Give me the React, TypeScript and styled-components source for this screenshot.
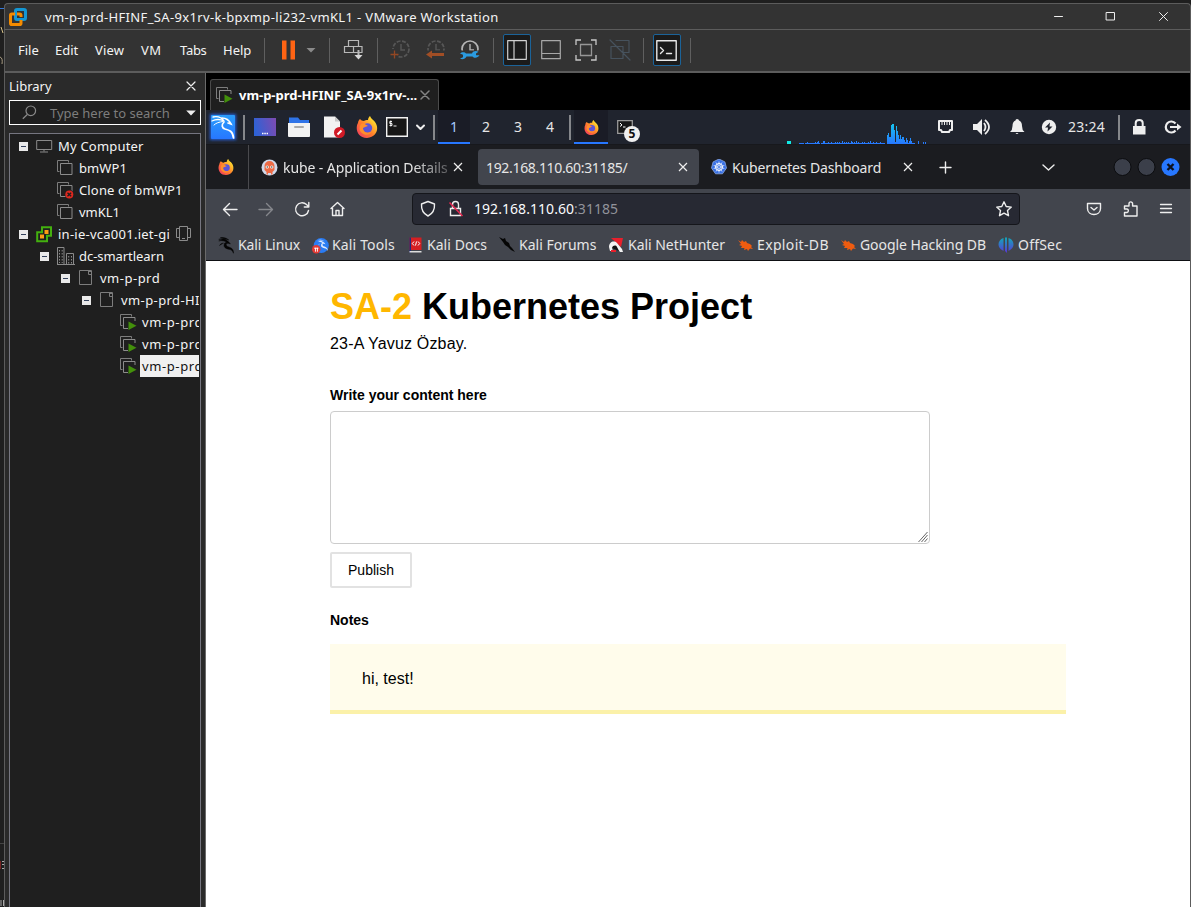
import React from 'react';
import styled, { createGlobalStyle, css } from 'styled-components';

const winFont = '"Noto Sans", "Open Sans", sans-serif';
const line = '#5c5c5c';

const Global = createGlobalStyle`
  * { box-sizing: border-box; }
  body { margin: 0; background: #1f1f1f; overflow: hidden; }
  svg { display: block; flex: none; }
`;

/* ---------- window frame ---------- */
const Desktop = styled.div`
  width: 1191px; height: 907px; padding: 3px 0 0 4px; overflow: hidden;
  background: #1f1f1f; font: 13px/18px ${winFont}; color: #f4f4f4; white-space: nowrap;
  position: relative;
`;
const Behind = styled.div`
  position: absolute; left: 0; top: 0; width: 4px; height: 907px;
`;
const Frame = styled.div`
  height: 904px; border: 1px solid ${line}; border-bottom: 0; background: #333;
  border-radius: 4px 4px 0 0;
  display: flex; flex-direction: column;
`;
const TitleBar = styled.header`
  height: 26px; flex: none; display: flex; align-items: center; border-bottom: 1px solid ${line};
  padding-left: 3px;
`;
const Title = styled.span`flex: 1; margin-left: 17px; letter-spacing: 0.345px; padding-top: 1px;`;
const WindowControls = styled.div`display: flex; gap: 37.5px; padding-right: 19.5px;`;

const MenuBar = styled.div`
  height: 43px; flex: none; display: flex; align-items: center; border-bottom: 2px solid ${line};
  padding-bottom: 1px;
`;
const Menu = styled.nav`display: flex; width: 259px; padding: 0 0 1px 13px;`;
const MenuItem = styled.span<{ $w: number; $ls?: number }>`
  width: ${p => p.$w}px; letter-spacing: ${p => p.$ls ?? 0}px;
`;
const Divider = styled.i`width: 1px; height: 25px; background: #5f5f5f; flex: none;`;
const ToolGroup = styled.div<{ $gap?: number; $l: number; $r: number }>`
  display: flex; align-items: center; gap: ${p => p.$gap ?? 0}px;
  padding: 0 ${p => p.$r}px 0 ${p => p.$l}px;
`;
const ToolToggle = styled.div<{ $on?: boolean }>`
  width: 28px; height: 32px; display: grid; place-items: center; border-radius: 2px;
  ${p => p.$on && css`background: #1b1b1b; border: 1px solid #1b6399;`}
`;

const Body = styled.div`flex: 1; min-height: 0; display: flex;`;

/* ---------- library ---------- */
const Library = styled.aside`
  width: 201px; flex: none; background: #2a2a2a; border-right: 1px solid #6a6a6a;
  display: flex; flex-direction: column; padding: 0 4px;
`;
const LibraryHead = styled.div`
  height: 27px; display: flex; align-items: center; justify-content: space-between; padding: 0 5px 2px 0;
`;
const Search = styled.div`
  height: 25px; flex: none; border: 1px solid #fff; background: #1f1f1f; color: #7d7d7d;
  display: flex; align-items: center; padding: 0 4px 0 12px;
`;
const SearchHint = styled.span`flex: 1; margin-left: 13px;`;
const Tree = styled.div`
  margin-top: 8px; flex: 1; border: 1px solid #767680; border-bottom: 0; background: #1f1f1f;
  padding: 1px 1px 0 0; overflow: hidden;
`;
const TreeRow = styled.div<{ $level: number }>`
  height: 22px; display: flex; align-items: center; padding-left: ${p => 9 + 21 * p.$level}px;
  overflow: hidden;
`;
const TreeIcon = styled.span<{ $gap?: number }>`
  width: 20px; margin-left: ${p => p.$gap ?? 8}px; display: flex; flex: none;
`;
const TreeLabel = styled.span<{ $selected?: boolean; $ls?: number }>`
  line-height: 22px; padding: 0 2px; letter-spacing: ${p => p.$ls ?? 0}px; height: 22px;
  ${p => p.$selected && css`background: #f0f0f0; color: #111;`}
`;

/* ---------- console ---------- */
const Console = styled.main`flex: 1; min-width: 0; background: #000; display: flex; flex-direction: column;`;
const VmTabs = styled.div`height: 37px; flex: none; display: flex; align-items: flex-end; padding-left: 4px;`;
const VmTab = styled.div`
  width: 229px; height: 31px; background: #1f1f1f; border: 1px solid #4b4b4b; border-bottom: 0;
  border-radius: 3px 3px 0 0; display: flex; align-items: center; padding: 0 8px 1px 5px;
  font-weight: 700; font-size: 13px; color: #fff;
`;
const VmTabName = styled.span`flex: 1; margin-left: 5px; letter-spacing: -0.03px;`;

const Guest = styled.section`
  flex: 1; min-height: 0; display: flex; flex-direction: column; color: #e6e6e6;
  font: 14px/20px "Noto Sans", "Open Sans", sans-serif;
`;
const Panel = styled.div`
  height: 34px; flex: none; background: #20242e; display: flex; align-items: center;
`;
const PanelDivider = styled.i<{ $l: number; $r: number }>`
  width: 2px; height: 25px; background: #85878b; margin: 0 ${p => p.$r}px 0 ${p => p.$l}px; flex: none;
`;
const Launchers = styled.div`display: flex; align-items: center; gap: 10px; margin-right: 8px;`;
const Workspace = styled.div<{ $active?: boolean }>`
  width: 32px; height: 34px; display: grid; place-items: center; padding-top: 2px;
  border-bottom: 2px solid transparent;
  ${p => p.$active && css`background: #1a1c26; border-color: #2777ff; color: #a8caff;`}
`;
const Task = styled(Workspace)`width: 34px;`;
const TaskTerminal = styled.div`position: relative; margin-left: 9px;`;
const TaskCount = styled.b`
  position: absolute; left: 7px; top: 6px; width: 16px; height: 16px; border-radius: 50%;
  background: #efefef; color: #111; font-size: 12px; line-height: 16px; text-align: center;
`;
const GraphSlot = styled.div`align-self: flex-end;`;
const Tray = styled.div`display: flex; align-items: center;`;
const Clock = styled.span`width: 55px; padding-left: 5px; letter-spacing: 0.25px;`;
const Spacer = styled.i`flex: 1;`;

/* ---------- browser ---------- */
const BrowserTabs = styled.div`
  height: 45px; flex: none; background: #1b1c20; border-top: 1px solid #17181c;
  display: flex; align-items: center; padding-left: 12px;
`;
const PinnedTab = styled.div`width: 31px; height: 44px; display: flex; align-items: center; border-right: 1px solid #4a4a4e;`;
const BrowserTab = styled.div<{ $w: number; $l: number; $active?: boolean; $pr: number }>`
  width: ${p => p.$w}px; height: 36px; display: flex; align-items: center; border-radius: 4px;
  padding: 0 ${p => p.$pr}px 0 ${p => p.$l}px; gap: 5px;
  ${p => p.$active && css`background: #42454d;`}
`;
const TabName = styled.span<{ $fade?: boolean; $ls: number }>`
  flex: 1; letter-spacing: ${p => p.$ls}px; padding-top: 2px;
  ${p => p.$fade && css`
    margin-right: -5px;
    mask-image: linear-gradient(to right, #000 78%, rgba(0, 0, 0, 0.3));
  `}
`;
const RoundButtons = styled.div`display: flex; gap: 5px; padding: 0 10px 0 55px;`;
const NavBar = styled.div`
  height: 41px; flex: none; background: #42454d; display: flex; align-items: center; padding: 0 0 1px 14px;
`;
const NavButtons = styled.div`display: flex; gap: 16px;`;
const Address = styled.div`
  width: 608px; height: 32px; margin-left: 64px; border: 1px solid #15161b; border-radius: 4px;
  background: #272933; display: flex; align-items: center; padding: 0 5px;
`;
const AddressText = styled.span`flex: 1; margin-left: 8px; color: #fbfbfe; letter-spacing: 0.05px;`;
const Port = styled.span`color: #92939b;`;
const NavActions = styled.div`display: flex; gap: 16px; margin-left: 64px;`;
const Bookmarks = styled.div`
  height: 31px; flex: none; background: #42454d; border-bottom: 1px solid #0e0f13;
  display: flex; align-items: center; padding-left: 12px;
`;
const Bookmark = styled.span<{ $w: number; $ls: number }>`
  width: ${p => p.$w}px; flex: none; display: flex; align-items: center; gap: 3px; letter-spacing: ${p => p.$ls}px;
`;

/* ---------- page ---------- */
const Page = styled.article`
  flex: 1; background: #fff; color: #000; padding: 25px 0 0 124px; white-space: normal;
  font: 16px/20px "Liberation Sans", Arial, sans-serif;
`;
const Heading = styled.h1`margin: 0; font-size: 36px; line-height: 42px; font-weight: 700;`;
const Accent = styled.span`color: #ffb700;`;
const Author = styled.p`margin: 6px 0 0; letter-spacing: 0.18px;`;
const Label = styled.label<{ $mt: number }>`
  display: block; margin: ${p => p.$mt}px 0 0; font-size: 14px; line-height: 18px; font-weight: 700;
`;
const Editor = styled.div`
  width: 600px; height: 133px; margin-top: 7px; border: 1px solid #ccc; border-radius: 4px;
  display: flex; align-items: flex-end; justify-content: flex-end;
`;
const Publish = styled.button`
  display: block; margin-top: 8px; width: 82px; height: 36px; padding: 0; border: 2px solid #e2e2e2; border-radius: 2px;
  background: #fff; color: #000; font: 14px/18px "Liberation Sans", Arial, sans-serif;
`;
const Note = styled.div`
  width: 736px; height: 70px; margin-top: 15px; padding: 25px 32px 0; background: #fffceb;
  border-bottom: 4px solid #fbf1a9;
`;

/* ---------- drawings ---------- */
const VmIcon = ({ state }: { state?: 'run' | 'bad' }) => (
  <svg width="18" height="18" viewBox="0 0 18 18" fill="none">
    <path d="M2.500 12.500h-2v-11h11v2" stroke="#7d7d7d" />
    <path d="M3.500 4.500h11.500v11H3.500z" stroke="#8c8c8c" fill="#1f1f1f" />
    {state === 'run' && <><path d="M8 8h10v10H8z" fill="#1f1f1f" /><path d="M8.500 8.500v8.500l8-4.200z" fill="#43900b" /></>}
    {state === 'bad' && <><circle cx="12.500" cy="13.500" r="4.600" fill="#1f1f1f" /><circle cx="12.300" cy="13.500" r="4" fill="#dd281f" /><path d="m10.500 11.700 3.600 3.600m0-3.600-3.600 3.600" stroke="#1f1f1f" strokeWidth="1.300" /></>}
  </svg>
);
const Minus = () => (
  <svg width="9" height="9" viewBox="0 0 9 9"><path d="M0 0h9v9H0z" fill="#e9e9e9" /><path d="M2 4.500h5" stroke="#33415c" /></svg>
);
const Pool = () => (
  <svg width="18" height="18" viewBox="0 0 18 18" fill="none" stroke="#7d7d7d"><path d="M1.500 1.500h12v14h-12zM10.500 1.500v4h3M11 2.500h2" /></svg>
);
const Computer = () => (
  <svg width="17" height="16" viewBox="0 0 17 16" fill="none" stroke="#8a8a8a"><path d="M.7 2.500h15v9H.7zM8 11.500v2M4 14h8" /></svg>
);
const Server = () => (
  <svg width="17" height="17" viewBox="0 0 17 17" fill="none">
    <path d="M6 1.200h9v8.500h-4v5.500H1.200v-9H6z" stroke="#43b00f" strokeWidth="2" />
    <path d="M8.500 4h4v4h-4zM4 8.500h4v4H4z" fill="#ff9c12" />
  </svg>
);
const Datacenter = () => (
  <svg width="18" height="18" viewBox="0 0 18 18" fill="none" stroke="#8a8a8a">
    <path d="M.5.500h6.500v17H.5zM9.500 6.500h7v11h-7zM0 17.500h18" /><path d="M2.500 3v13M5.200 3v13M11.700 9v8M14.500 9v8" strokeDasharray="1.500 1.500" />
  </svg>
);
const Devices = () => (
  <svg width="18" height="18" viewBox="0 0 18 18" fill="none" stroke="#8a8a8a"><path d="M4.500 1.500h8v14h-8zM4.500 3.500h-3v9h3M12.500 3.500h3v9h-3M7 13.500h3" /></svg>
);
const Firefox = ({ size }: { size: number }) => (
  <svg width={size} height={size} viewBox="0 0 22 22">
    <defs><linearGradient id="fx" x1="1" y1="0" x2="0" y2="1"><stop offset=".2" stopColor="#ffd62e" /><stop offset=".55" stopColor="#ff7a2c" /><stop offset="1" stopColor="#f0326a" /></linearGradient></defs>
    <path d="M4 3c1 1 2 2 4 2 1-1 2-1 4-1 0-2 1-3 2-4 1 3 4 4 5 6 4 5 3 15-8 16C1 22-1 12 2 7c0-2 1-3 2-4z" fill="url(#fx)" />
    <circle cx="11.500" cy="12" r="4.700" fill="#5b55d8" />
    <path d="M5 8c2-1 4 0 7 2l-3 1-2 1c0 5 6 6 9 3-1 4-7 5-10 2-3-2-3-6-1-9z" fill="#ff8f2c" />
  </svg>
);
const dragonPath = 'M1 3c4-1 8-1 11 2 2 1 3 3 4 4l-3-1c-2 0-3 1-2 3 1 2 5 2 7 4 2 2 2 4 2 6-1-3-3-5-6-5-4-1-7-3-6-6 0-2 1-3 3-3-2-2-6-3-10-2l5-1C4 3 3 3 1 3zM3 1c4-1 8 0 11 3-3-1-6-2-11-3zM2 11c1-2 3-3 5-3-2 1-4 2-5 3z';
const Dragon = () => (
  <svg width="17" height="17" viewBox="0 0 22 22"><path d={dragonPath} fill="#050505" stroke="#050505" strokeWidth=".6" /></svg>
);
const ToolsDragon = () => (
  <svg width="17" height="17" viewBox="0 0 22 22">
    <circle cx="12" cy="11" r="9.800" fill="#2a7cf3" />
    <path d={dragonPath} transform="translate(6 3) scale(.72)" fill="#dfeaff" />
    <circle cx="5.500" cy="16" r="5.500" fill="#e23a34" /><path d="M2.800 14.500h5.500M4.500 14v5M7 14v5" stroke="#fff" strokeWidth="1.200" />
  </svg>
);
const KaliMenu = () => (
  <svg width="34" height="34" viewBox="0 0 34 34">
    <defs><filter id="glow" x="-30%" y="-30%" width="160%" height="160%"><feGaussianBlur stdDeviation="1.800" /></filter>
      <linearGradient id="kb" x1="0" y1="0" x2="0" y2="1"><stop stopColor="#2a9dfb" /><stop offset="1" stopColor="#2777ff" /></linearGradient></defs>
    <rect x="4" y="4" width="26" height="26" fill="#2461d8" filter="url(#glow)" />
    <rect x="5" y="5" width="24" height="24" rx="1" fill="url(#kb)" />
    <g fill="none" stroke="#fff" strokeLinecap="round">
      <path d="M7 7c5-1 9 1 11 4M6 11c4-2 8-2 12 0" strokeWidth="1.300" />
      <path d="M8 15c2-2 5-3 9-3.500" strokeWidth="1" />
      <path d="M16 8c4 0 7 2 9 6l-3-1M18 12c-3 3-2 6 1 7 4 1 8 2 8.500 9" strokeWidth="1.700" />
    </g>
  </svg>
);
const DesktopIcon = () => (
  <svg width="24" height="24" viewBox="0 0 24 24"><defs><linearGradient id="dk" x1="0" y1=".5" x2="1" y2=".3"><stop stopColor="#2d62d6" /><stop offset="1" stopColor="#7a4cb4" /></linearGradient></defs>
    <path d="M1 3h22v18H1z" fill="url(#dk)" /><path d="M9 18.500h6" stroke="#fff" strokeWidth="1.500" strokeDasharray="1.500 .8" /></svg>
);
const FolderIcon = () => (
  <svg width="24" height="24" viewBox="0 0 24 24"><path d="M2 2.500h9l2 2.500h9v6H2z" fill="#2f74e8" /><path d="M1 8h22v13q0 1-1 1H2q-1 0-1-1z" fill="#f2f2f2" /><path d="M8 12h8" stroke="#aaa" strokeWidth="2" strokeLinecap="round" /></svg>
);
const DocIcon = () => (
  <svg width="25" height="24" viewBox="-1 0 25 24"><path d="M2 1.500h11l5 5v16H2z" fill="#f2f2f2" /><path d="M13 1.500v5h5z" fill="#c8c8c8" /><circle cx="17.500" cy="17.500" r="5.500" fill="#d01a26" /><path d="m15.500 19.500 4-4" stroke="#fff" strokeWidth="2" /></svg>
);
const TerminalIcon = () => (
  <svg width="22" height="24" viewBox="0 0 22 24" fill="none"><path d="M.7 2.700h20.600v18.600H.7z" fill="#161616" stroke="#f2f2f2" strokeWidth="1.400" /><path d="M6 6.500H3.800v2H6v2H3.500M4.800 5.500v6M7.500 11h3" stroke="#fff" strokeWidth=".9" /></svg>
);
const Cross = () => (
  <svg width="20" height="20" viewBox="-10 -10 20 20"><path d="M-4-4 4 4M4-4-4 4" stroke="#eee" strokeWidth="1.200" /></svg>
);
const ClockTool = ({ kind }: { kind: 'take' | 'revert' | 'manage' }) => {
  const c = kind === 'manage' ? '#b5b5b5' : '#575757';
  return (
    <svg width="24" height="24" viewBox="0 0 24 24" fill="none">
      <circle cx="13" cy="11" r="8" stroke={c} strokeWidth="1.700" strokeDasharray={kind === 'manage' ? undefined : '4 1.500'} />
      <path d="M13 6v6h4" stroke={c} strokeWidth="1.400" />
      {kind === 'take' && <><path d="M2 11h7v11H2z" fill="#333" /><path d="M6.500 12.500v8M2.500 16.500h8" stroke="#934723" strokeWidth="1.300" /></>}
      {kind === 'revert' && <><path d="M2 12.500h20v9H2z" fill="#333" /><path d="M3 16.500 9 12.500V15h12v3H9v2.500z" fill="#a14e25" /></>}
      {kind === 'manage' && <><path d="M2 12.500h21v9H2z" fill="#333" /><path d="M3 15.500C5 13.500 8 14 9 15.500h6c1-2.500 4-3 6.500-1.800L19 15.500v1.800h3.500C21 20 17 20.500 15.500 18.500H9.500C8 21.500 5 21.800 3 20.500l3-1.200v-2.500z" fill="#2b9be0" /></>}
    </svg>
  );
};
const Star = () => (
  <svg width="20" height="20" viewBox="0 0 20 20" fill="none" stroke="#eee" strokeWidth="1.400" strokeLinejoin="round"><path d="m10 2.800 2.200 4.700 5.100.6-3.800 3.500 1 5.100-4.500-2.500-4.500 2.500 1-5.100L2.700 8.100l5.100-.6z" /></svg>
);
const K8s = () => (
  <svg width="16" height="16" viewBox="0 0 16 16" fill="none"><path d="m8 0 5.900 2.900L15.500 9l-4 5.800h-7L.5 9 2.100 2.900z" fill="#3970e4" stroke="#9bb8f2" strokeWidth=".7" /><circle cx="8" cy="8" r="3.500" stroke="#fff" /><path d="M8 2.500v11M2.700 6.500l10.600 3M2.700 9.500l10.600-3M5 12.500l6-9M5 3.500l6 9" stroke="#fff" strokeWidth=".7" /><circle cx="8" cy="8" r="1" fill="#3970e4" /></svg>
);
const Argo = () => (
  <svg width="17" height="17" viewBox="0 0 17 17"><circle cx="8.500" cy="8.500" r="8" fill="#cfd8ea" /><path d="M3.500 7a5 5 0 0 1 10 0v4l-2 2v2.500h-1.500V14H7v1.500H5.500V13l-2-2z" fill="#ec6a45" /><circle cx="6.200" cy="8" r="1.600" fill="#fff" /><circle cx="10.800" cy="8" r="1.600" fill="#fff" /><circle cx="6.200" cy="8" r=".7" fill="#222" /><circle cx="10.800" cy="8" r=".7" fill="#222" /></svg>
);
const Ghost = () => (
  <svg width="17" height="16" viewBox="0 0 17 16"><path d="m1 3 3 2 1-2 2 2 2-1 1 2 3 1 2 2-1 1 2 2-3-.5L11 14l-1-2-3 1 .5-2L4 11l1-2-3-1 2-1z" fill="#ef5c10" /></svg>
);
const Docs = () => (
  <svg width="15" height="16" viewBox="0 0 15 16" fill="none"><path d="M.5.500h12V13H.5z" fill="#d41f22" /><path d="M.5.500H2v15H.5z" fill="#222b7a" /><path d="M.5 14h12v1.500H.5z" fill="#ddd" /><path d="M5 4.500 3.300 6.500 5 8.500M9 4.500l1.700 2L9 8.500M7.500 4.500l-1 4" stroke="#fff" /></svg>
);
const Forums = () => (
  <svg width="17" height="16" viewBox="0 0 17 16"><path d="m0 0 4 2 2-1 1 3 3 2 1 3 2 2 3 4-4-2-3-3-3-2-2-3z" fill="#050505" /></svg>
);
const NetHunter = () => (
  <svg width="17" height="16" viewBox="0 0 17 16"><path d="M3 1h12l-2 9z" fill="#e8202c" /><path d="M1 10C1 5 6 3 9 6l5 6 1 3h-3l-4-5c-2-1-3 0-4 2l2 2H2z" fill="#f2f2f2" /><path d="M4 11c1-3 4-3 5-1l2 4z" fill="#111" /><path d="M3 13h5v2H3z" fill="#e8202c" /></svg>
);
const OffSec = () => (
  <svg width="17" height="16" viewBox="0 0 17 16"><defs><linearGradient id="os" x1="0" y1="0" x2="0" y2="1"><stop stopColor="#12a8b8" /><stop offset="1" stopColor="#5b35d8" /></linearGradient></defs><path d="M5.500 1v13C2 12 .5 10 .5 7.500S2 2 5.500 1zM7 .5h2V16L7 14zM10.500 1v13c3.500-2 5-4 5-6.500S14 2 10.500 1z" fill="url(#os)" /></svg>
);

const idle = [1,1,1,1,1,0,1,1,2,1,1,1,1,1,1,1,2,1,2,3,1,0,1,1,3,3,1,1,1,2,1,1,2,1,1,1,2,1,2,1,2,1,1,3,1,2,1,2,1,2,1,1,3,2,1,2,1,3,1,2,1,1,1,2,1,2,1,1,1,2,1,3,1,1,2,1,1,2,1,1,1,2,1,1,1,1];
const burst = [9, 11, 7, 7, 19, 20, 20, 14, 2, 18, 13, 9, 5, 9, 5, 7, 7, 4, 2, 6, 4, 1, 3, 6, 3, 1, 1, 1];
const CpuGraph = () => (
  <svg width="142" height="24" viewBox="0 0 142 24" shapeRendering="crispEdges">
    <defs><linearGradient id="cpu" gradientUnits="userSpaceOnUse" x1="0" y1="4" x2="0" y2="24"><stop stopColor="#16c3f0" /><stop offset="1" stopColor="#2777ff" /></linearGradient></defs>
    <path d="M1 21h4v3H1z" fill="#10e9e4" />
    <g fill="url(#cpu)">
      {idle.map((h, i) => h > 0 && <rect key={i} x={13 + i} y={24 - h} width="1" height={h} />)}
      {burst.map((h, i) => <rect key={i} x={101 + i} y={24 - h} width="1" height={h} />)}
      <path d="M132 21h1v3h-1zM137 22h1v2h-1zM139 22h1v2h-1z" />
    </g>
  </svg>
);

const Tool = ({ d, size = 20, color = '#eee', w = 1.4 }: { d: string; size?: number; color?: string; w?: number }) => (
  <svg width={size} height={size} viewBox={`0 0 ${size} ${size}`} fill="none" stroke={color} strokeWidth={w} strokeLinejoin="round" strokeLinecap="round"><path d={d} /></svg>
);

const menu: [string, number, number][] = [['File', 37, 0], ['Edit', 40, 0], ['View', 46, 0.2], ['VM', 39, 0.5], ['Tabs', 43, -0.3], ['Help', 41, 0]];

type Node = { level: number; label: string; icon: React.ReactNode; open?: boolean; selected?: boolean; extra?: boolean; ls?: number };
const nodes: Node[] = [
  { level: 0, label: 'My Computer', icon: <Computer />, open: true, ls: 0.2 },
  { level: 1, label: 'bmWP1', icon: <VmIcon />, ls: 0.1 },
  { level: 1, label: 'Clone of bmWP1', icon: <VmIcon state="bad" />, ls: 0.15 },
  { level: 1, label: 'vmKL1', icon: <VmIcon /> },
  { level: 0, label: 'in-ie-vca001.iet-gi', icon: <Server />, open: true, extra: true, ls: 0.25 },
  { level: 1, label: 'dc-smartlearn', icon: <Datacenter />, open: true, ls: -0.05 },
  { level: 2, label: 'vm-p-prd', icon: <Pool />, open: true, ls: 0.5 },
  { level: 3, label: 'vm-p-prd-HI', icon: <Pool />, open: true, ls: 0.4 },
  { level: 4, label: 'vm-p-prd', icon: <VmIcon state="run" />, ls: 0.6 },
  { level: 4, label: 'vm-p-prd', icon: <VmIcon state="run" />, ls: 0.6 },
  { level: 4, label: 'vm-p-prd', icon: <VmIcon state="run" />, selected: true, ls: 0.6 },
];

const bookmarks: [string, number, number, React.ReactNode][] = [
  ['Kali Linux', 94, -0.1, <Dragon />],
  ['Kali Tools', 97, 0.15, <ToolsDragon />],
  ['Kali Docs', 90, 0.05, <Docs />],
  ['Kali Forums', 109, 0, <Forums />],
  ['Kali NetHunter', 129, -0.03, <NetHunter />],
  ['Exploit-DB', 103, 0.35, <Ghost />],
  ['Google Hacking DB', 158, -0.07, <Ghost />],
  ['OffSec', 64, 0.2, <OffSec />],
];

export default function App() {
  return (
    <Desktop>
      <Global />
      <Behind>
        <svg width="4" height="907" viewBox="0 0 4 907" fill="none"><path d="M0 8.500h4" stroke="#3478d8" /><path d="m1 27 2 6" stroke="#d8c38a" /><path d="M0 57q3 1 2 7" stroke="#a99c83" /><path d="M0 843.500h4" stroke="#444" /><path d="M0 861h1v8H0z" fill="#722" /><path d="M2 861.500h2M2 864.500h2M2 868.500h2M1 900v6M3.500 900v6" stroke="#aaa" /></svg>
      </Behind>
      <Frame>
        <TitleBar>
          <svg width="20" height="20" viewBox="0 0 20 20" fill="none" strokeWidth="3">
            <rect x="7.500" y="2.500" width="10" height="10" rx="1.500" stroke="#1497d4" /><path d="M7 7H3.800q-1.300 0-1.300 1.300v7.900q0 1.300 1.300 1.300h7.900q1.300 0 1.300-1.300V13M9 7h2.500q1.500 0 1.500 1.500V10" stroke="#f38b00" />
          </svg>
          <Title>vm-p-prd-HFINF_SA-9x1rv-k-bpxmp-li232-vmKL1 - VMware Workstation</Title>
          <WindowControls>
            <Tool size={15} w={1} d="M3.500 7.500h8" /><Tool size={15} w={1} d="M3.500 3.500h8v7.500h-8z" /><Tool size={15} w={1} d="m3.500 3.500 8 8m0-8-8 8" />
          </WindowControls>
        </TitleBar>
        <MenuBar>
          <Menu>{menu.map(([t, w, ls]) => <MenuItem key={t} $w={w} $ls={ls}>{t}</MenuItem>)}</Menu>
          <Divider />
          <ToolGroup $l={12} $r={12} $gap={4}>
            <svg width="24" height="24" viewBox="0 0 24 24"><path d="M5 2.500h4.500v19H5zM13.500 2.500H18v19h-4.500z" fill="#ff6414" /></svg>
            <svg width="12" height="12" viewBox="0 0 12 12"><path d="M1.500 4h9L6 8.500z" fill="#8a8a8a" /></svg>
          </ToolGroup>
          <Divider />
          <ToolGroup $l={12} $r={11}>
            <svg width="24" height="24" viewBox="0 0 24 24" fill="none" stroke="#b8b8b8" strokeWidth="1.200"><path d="M6.500 2.500h10v6h-10zM2.500 8.500h9v6h-9zM11.500 8.500h8.500v6h-8.500z" /><path d="M16.500 12v7" strokeWidth="2" /><path d="M12.500 17h8l-4 4.500z" fill="#d8d8d8" stroke="none" /></svg>
          </ToolGroup>
          <Divider />
          <ToolGroup $l={10} $r={12} $gap={10.5}>
            <ClockTool kind="take" /><ClockTool kind="revert" /><ClockTool kind="manage" />
          </ToolGroup>
          <Divider />
          <ToolGroup $l={9} $r={9} $gap={6.3}>
            <ToolToggle $on><Tool size={20} w={1.2} color="#d0d0d0" d="M.7.700h18.600v18.600H.7zM7 .7v18.600" /></ToolToggle>
            <ToolToggle><Tool size={20} w={1.2} color="#a8a8a8" d="M.7.700h18.600v18H.7zM.7 13.500h18.600" /></ToolToggle>
            <ToolToggle><svg width="22" height="22" viewBox="0 0 22 22" fill="none" stroke="#c8c8c8" strokeWidth="1.300"><path d="M1 6V1h5M16 1h5v5M21 16v5h-5M6 21H1v-5" /><path d="M5.500 5.500h11v11h-11z" stroke="#969696" /></svg></ToolToggle>
            <ToolToggle><Tool size={22} w={1.2} color="#46525d" d="M1 1l20 20M7 1.500h13v12h-6M2 7.500h12v12H2z" /></ToolToggle>
          </ToolGroup>
          <Divider />
          <ToolGroup $l={9} $r={9}>
            <ToolToggle $on><Tool size={21} w={1.4} color="#e8e8e8" d="M.8.800h19.400v19.400H.8zM4.500 7.500l3 3-3 3M10.500 13.500h5" /></ToolToggle>
          </ToolGroup>
          <Divider />
        </MenuBar>
        <Body>
          <Library>
            <LibraryHead>Library<Tool size={10} w={1.2} d="m1 1 8 8m0-8L1 9" /></LibraryHead>
            <Search>
              <svg width="15" height="15" viewBox="0 0 15 15" fill="none" stroke="#8a8a8a" strokeWidth="1.200"><circle cx="8.800" cy="5.800" r="4.800" /><path d="m5.300 9.500-4.500 4.300" /></svg>
              <SearchHint>Type here to search</SearchHint>
              <svg width="10" height="6" viewBox="0 0 10 6"><path d="M.2.500h9.600L5 5.500z" fill="#eee" /></svg>
            </Search>
            <Tree>
              {nodes.map((n, i) => (
                <TreeRow key={i} $level={n.level}>
                  {n.open ? <Minus /> : <svg width="9" height="9" />}
                  <TreeIcon>{n.icon}</TreeIcon>
                  <TreeLabel $selected={n.selected} $ls={n.ls}>{n.label}</TreeLabel>
                  {n.extra && <TreeIcon $gap={3}><Devices /></TreeIcon>}
                </TreeRow>
              ))}
            </Tree>
          </Library>
          <Console>
            <VmTabs>
              <VmTab>
                <VmIcon state="run" /><VmTabName>vm-p-prd-HFINF_SA-9x1rv-...</VmTabName>
                <Tool size={10} w={1.5} color="#858585" d="m1 1 8 8m0-8L1 9" />
              </VmTab>
            </VmTabs>
            <Guest>
              <Panel>
                <KaliMenu />
                <PanelDivider $l={3} $r={8} />
                <Launchers>
                  <DesktopIcon /><FolderIcon /><DocIcon /><Firefox size={22} />
                </Launchers>
                <TerminalIcon />
                <Tool size={24} w={2} d="m9 10.500 3.500 3.500 3.500-3.500" />
                <PanelDivider $l={1} $r={3} />
                <Workspace $active>1</Workspace><Workspace>2</Workspace><Workspace>3</Workspace><Workspace>4</Workspace>
                <PanelDivider $l={3} $r={3} />
                <Task $active><Firefox size={15} /></Task>
                <TaskTerminal>
                  <svg width="16" height="14" viewBox="0 0 16 14" fill="none"><path d="M.7.700h14.600v12.600H.7z" fill="#161616" stroke="#999" strokeWidth="1.300" /><path d="m3 3 2 2-2 1.500M6 7h2.500" stroke="#fff" /></svg>
                  <TaskCount>5</TaskCount>
                </TaskTerminal>
                <Spacer />
                <GraphSlot><CpuGraph /></GraphSlot>
                <Tray>
                  <svg width="37" height="20" viewBox="0 0 37 20" fill="none"><path d="M11 4h13v9h-2l-1 2h-7l-1-2h-2z" stroke="#eee" strokeWidth="2" strokeLinejoin="round" /><path d="M14 4v4M16.500 4v4M19 4v4M21.500 4v4" stroke="#eee" /></svg>
                  <svg width="36" height="20" viewBox="0 0 36 20" fill="none"><path d="M8 7h4l5-5v16l-5-5H8z" fill="#eee" /><path d="M19 6q3 4 0 8M20 3q8 7 0 14" stroke="#eee" strokeWidth="1.800" /></svg>
                  <svg width="34" height="20" viewBox="0 0 34 20"><path d="M16 2q2 0 2 1.500 3 1 3 5.500 0 4 2.500 6H9q2.500-2 2.500-6 0-4.500 3-5.500Q14.500 2 16 2zM14.500 16h3q-1.500 2-3 0z" fill="#eee" /></svg>
                  <svg width="28" height="20" viewBox="0 0 28 20"><circle cx="14" cy="10" r="7.200" fill="#eee" /><path d="m15 5.500-5 5h3l-.5 4 5-5H14.500z" fill="#20242e" /></svg>
                  <Clock>23:24</Clock>
                  <PanelDivider $l={0} $r={6} />
                  <svg width="32" height="20" viewBox="0 0 32 20" fill="none"><path d="M7 9h12.500v8.500H7z" fill="#eee" /><path d="M9.700 10V6q0-3 3.500-3t3.500 3v4" stroke="#eee" strokeWidth="2" /></svg>
                  <svg width="32" height="20" viewBox="0 0 32 20" fill="none"><path d="M17.500 6.500a5.500 5.500 0 1 0 0 7" stroke="#eee" strokeWidth="2.200" /><path d="M12 10h9" stroke="#eee" strokeWidth="2" /><path d="M19 6.500 23.500 10 19 13.500z" fill="#eee" /></svg>
                </Tray>
              </Panel>
              <BrowserTabs>
                <PinnedTab><Firefox size={16} /></PinnedTab>
                <BrowserTab $w={229} $l={12} $pr={10}>
                  <Argo /><TabName $fade $ls={-0.08}>kube - Application Details</TabName><Cross />
                </BrowserTab>
                <BrowserTab $active $w={221} $l={8} $pr={6}>
                  <TabName $ls={-0.33}>192.168.110.60:31185/</TabName><Cross />
                </BrowserTab>
                <BrowserTab $w={231} $l={12} $pr={12}>
                  <K8s /><TabName $ls={-0.14}>Kubernetes Dashboard</TabName><Cross />
                </BrowserTab>
                <Tool size={32} d="M15.500 11v11M10 16.500h11" />
                <Spacer />
                <Tool size={20} d="m5 8 5.500 5 5.500-5" />
                <RoundButtons>
                  <svg width="19" height="20" viewBox="0 0 19 20"><circle cx="9.500" cy="10" r="8.500" fill="#3b3f4a" stroke="#0c0d10" /></svg>
                  <svg width="19" height="20" viewBox="0 0 19 20"><circle cx="9.500" cy="10" r="8.500" fill="#3b3f4a" stroke="#0c0d10" /></svg>
                  <svg width="19" height="20" viewBox="0 0 19 20"><circle cx="9.500" cy="10" r="9" fill="#2777ff" /><path d="m6.500 7 6 6m0-6-6 6" stroke="#0d1220" strokeWidth="2.400" /></svg>
                </RoundButtons>
              </BrowserTabs>
              <NavBar>
                <NavButtons>
                  <Tool d="M17 10.500H3.500m6-6-6 6 6 6" /><Tool color="#85878c" d="M3 10.500h13.500m-6-6 6 6-6 6" />
                  <Tool d="M16.500 11.500a6.500 6.500 0 1 1-2-6L16.500 7.500M16.800 3.500v4.500h-4.500" /><Tool d="M3 9.500 9.500 3.500 16 9.500M4.500 9v7.500h10V9M8 16.500v-5h3v5" />
                </NavButtons>
                <Address>
                  <Tool d="M10 2.500 16.500 5c.3 5-1.500 9.500-6.500 12-5-2.500-6.800-7-6.500-12z" />
                  <svg width="28" height="20" viewBox="0 0 28 20" fill="none" stroke="#eee" strokeWidth="1.400"><path d="M12.500 9.500h10v7h-10zM14.500 9V5.500q0-3 3-3t3 3V9" /><path d="m11.500 3.500 13 13.500" stroke="#e22850" strokeWidth="1.600" /></svg>
                  <AddressText>192.168.110.60<Port>:31185</Port></AddressText>
                  <Star />
                </Address>
                <NavActions>
                  <Tool d="M3.500 4.500h13v5c0 8-13 8-13 0zM7 8.500l3 2.500 3-2.500" />
                  <Tool d="M4.500 17v-3.500H7a1.800 1.800 0 0 0 0-3.500H4.500V7H9V4.700a1.800 1.800 0 0 1 3.600 0V7H17v10z" />
                  <Tool w={1.3} d="M4.500 5.500h11M4.500 9.500h11M4.500 13.500h11" />
                </NavActions>
              </NavBar>
              <Bookmarks>
                {bookmarks.map(([t, w, ls, icon]) => <Bookmark key={t} $w={w} $ls={ls}>{icon}{t}</Bookmark>)}
              </Bookmarks>
              <Page>
                <Heading><Accent>SA-2</Accent> Kubernetes Project</Heading>
                <Author>23-A Yavuz Özbay.</Author>
                <Label $mt={32}>Write your content here</Label>
                <Editor><svg width="13" height="13" viewBox="0 0 13 13" stroke="#666"><path d="m2.500 12 9-10M5.500 12l6-7M8.500 12l3-3.500" /></svg></Editor>
                <Publish>Publish</Publish>
                <Label as="h2" $mt={23}>Notes</Label>
                <Note>hi, test!</Note>
              </Page>
            </Guest>
          </Console>
        </Body>
      </Frame>
    </Desktop>
  );
}
